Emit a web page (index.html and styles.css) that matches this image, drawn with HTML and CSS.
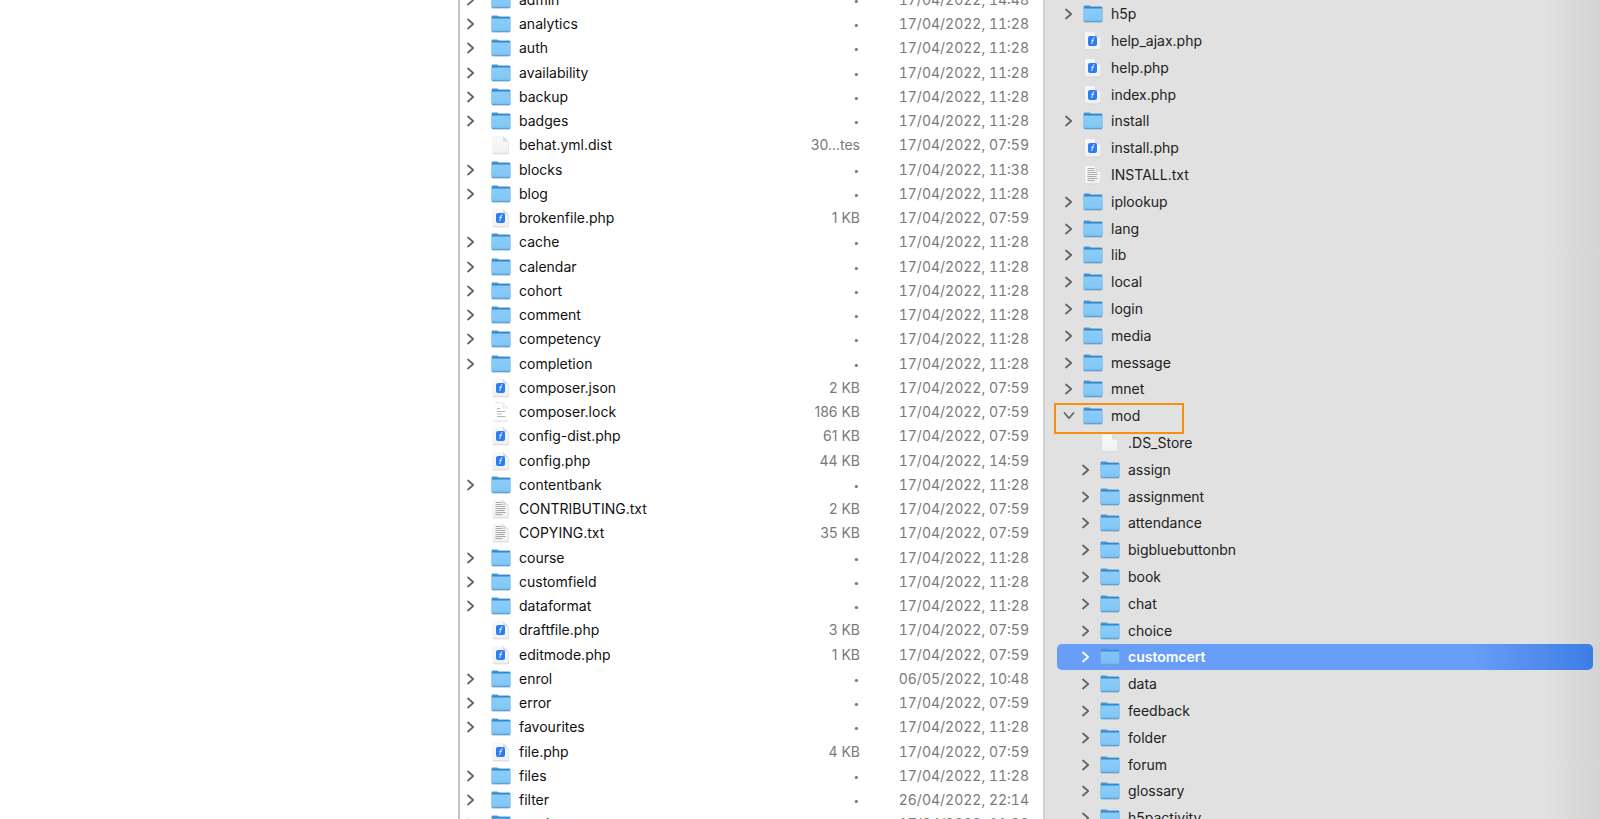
FILE: index.html
```
<!DOCTYPE html>
<html lang="en">
<head>
<meta charset="utf-8">
<title>Files</title>
<link rel="stylesheet" href="styles.css">
</head>
<body>
<svg class="sprite" aria-hidden="true">
  <defs>
    <linearGradient id="front" x1="0" y1="0" x2="0" y2="1"><stop offset="0" stop-color="#8accf9"/><stop offset=".75" stop-color="#84c8f7"/><stop offset="1" stop-color="#6fb5e8"/></linearGradient>
    <linearGradient id="paper" x1="0" y1="0" x2="0" y2="1"><stop offset="0" stop-color="#fafafa"/><stop offset="1" stop-color="#f0f0f0"/></linearGradient>
    <symbol id="folder" viewBox="0 0 20 18">
      <path d="M.6 1.500Q.6.4 1.700.4h4.600q.6 0 1 .5l.5.500H18.300q1.100 0 1.100 1.100V16H.6z" fill="#4a97d3"/>
      <path d="M1 2.600h18v1H1z" fill="#1674c4"/>
      <path d="M.6 3.500h18.800v12.700q0 1-1 1H1.600q-1 0-1-1z" fill="url(#front)"/>
      <path d="M1.200 16.700h17.600" stroke="#5d9bc9" stroke-width="1"/>
    </symbol>
    <symbol id="blank" viewBox="0 0 20 20">
      <path d="M1.800 1.500h10.700l5.300 5.500v11.200q0 1.100-1.100 1.100H2.900q-1.100 0-1.100-1.100z" fill="#cfcfcf"/>
      <path d="M2 1.200h10l5.500 5.300v11q0 1-1 1H3q-1 0-1-1z" fill="url(#paper)"/>
      <path d="M12 1.200v4.300q0 1 1 1h4.500z" fill="#dcdcdc"/>
    </symbol>
    <symbol id="code" viewBox="0 0 20 20">
      <use href="#blank"/>
      <rect x="5" y="5" width="9" height="10" rx="2" fill="#2a7df6"/>
      <path d="M11.500 6.800Q10.300 6.300 9.900 8.200L8.700 13M8.200 9.300h2.800" stroke="#e8f1ff" stroke-width="1" fill="none"/>
    </symbol>
    <symbol id="text" viewBox="0 0 20 20">
      <use href="#blank"/>
      <path d="M4.500 3.500h7M4.500 5.500h7M4.500 7.500h9.500M4.500 9.500h10M4.500 11.500h9M4.500 13.500h10M4.500 15.500h7" stroke="#a0a0a0" stroke-width=".9"/>
    </symbol>
    <symbol id="plain" viewBox="0 0 20 20">
      <path d="M4 .7h7.500l5 5h-4.500V1.500" stroke="#ddd" stroke-width=".8" fill="none"/>
      <path d="M2.500 19h14" stroke="#ddd" stroke-width="1"/>
      <path d="M6 6.500h3M6 9.500h8M6 12h4.500M6 14.500h8.500" stroke="#b4b4b4" stroke-width="1"/>
    </symbol>
    <symbol id="chevron" viewBox="0 0 12 12">
      <path d="M3 1.500L8.200 6 3 10.500" stroke="currentColor" stroke-width="1.700" fill="none" stroke-linecap="round" stroke-linejoin="round"/>
    </symbol>
  </defs>
</svg>
<main class="desktop">
  <section class="blank-area"></section>
  <section class="browser" aria-label="Server files">
    <table class="files"><tbody id="files"></tbody></table>
  </section>
  <aside class="panel" aria-label="Project tree">
    <ul class="tree" id="tree"></ul>
  </aside>
</main>
<script src="files.js"></script>
</body>
</html>
```
FILE: styles.css
```
* { box-sizing: border-box; }

body {
  margin: 0;
  background: #fff;
  color: #222;
  font: 14px/20px Inter, "Liberation Sans", sans-serif;
}

button {
  display: block;
  padding: 0;
  border: 0;
  background: none;
  color: #626262;
  font: inherit;
}

.sprite {
  position: absolute;
  width: 0;
  height: 0;
}

.desktop {
  display: grid;
  grid-template-columns: 458fr 585fr 557fr;
  height: 100vh;
  overflow: hidden;
}

.browser {
  min-width: 0;
  border-left: 2px solid #c4c4c4;
  overflow: hidden;
}

.files {
  width: 100%;
  margin-top: -12px;
  border-collapse: collapse;
  table-layout: fixed;
}

.files tr { height: 24px; }
.files tr:nth-child(4n) { height: 25px; }

.files td {
  padding: 0;
  white-space: nowrap;
}

.name { color: #111; }

.size {
  width: 90px;
  color: #7a7a7a;
  text-align: right;
}

.files .size.folder {
  padding-right: 1px;
  font-size: 10px;
}

.date {
  width: 183px;
  color: #7a7a7a;
  text-align: right;
  font-variant-numeric: tabular-nums;
}

.files .date { padding-right: 14px; }

.entry {
  display: flex;
  align-items: center;
  height: 24px;
  padding-left: 5px;
}

.chevron {
  width: 12px;
  height: 12px;
}

.chevron svg { display: block; }

.icon {
  flex: none;
  width: 20px;
  height: 20px;
  margin: 0 8px 0 14px;
}

.icon.folder {
  height: 18px;
}

.panel {
  min-width: 0;
  border-left: 2px solid #d0d0d0;
  background: linear-gradient(to left, #d3d3d3, #dadad9 28px, #e1e1e1 56px);
  overflow: hidden;
}

.tree {
  margin: 0;
  padding: 0 7px 0 12px;
  list-style: none;
}

.node {
  position: relative;
  display: flex;
  align-items: center;
  height: 27px;
  padding-left: 6px;
  border-radius: 5px;
}

.node:nth-child(5n) { height: 26px; }
.node .icon { margin: 0 8px; }
.child { padding-left: 23px; }
.open .chevron { transform: rotate(90deg); }

.selected {
  background: linear-gradient(to right, #689df8 78%, #3d7de4);
  color: #fff;
  font-weight: 600;
}

.selected .chevron { color: #fff; }
.selected .icon { opacity: .8; }

.marker {
  position: absolute;
  top: 1px;
  left: -3px;
  z-index: 1;
  width: 130px;
  height: 31px;
  border: 2px solid #f78f0f;
}
```
FILE: files.js
```
const DAY = "17/04/2022, ";
const files = [
  ["admin", "folder", "•", DAY + "14:48"],
  ["analytics", "folder", "•", DAY + "11:28"],
  ["auth", "folder", "•", DAY + "11:28"],
  ["availability", "folder", "•", DAY + "11:28"],
  ["backup", "folder", "•", DAY + "11:28"],
  ["badges", "folder", "•", DAY + "11:28"],
  ["behat.yml.dist", "blank", "30...tes", DAY + "07:59"],
  ["blocks", "folder", "•", DAY + "11:38"],
  ["blog", "folder", "•", DAY + "11:28"],
  ["brokenfile.php", "code", "1 KB", DAY + "07:59"],
  ["cache", "folder", "•", DAY + "11:28"],
  ["calendar", "folder", "•", DAY + "11:28"],
  ["cohort", "folder", "•", DAY + "11:28"],
  ["comment", "folder", "•", DAY + "11:28"],
  ["competency", "folder", "•", DAY + "11:28"],
  ["completion", "folder", "•", DAY + "11:28"],
  ["composer.json", "code", "2 KB", DAY + "07:59"],
  ["composer.lock", "plain", "186 KB", DAY + "07:59"],
  ["config-dist.php", "code", "61 KB", DAY + "07:59"],
  ["config.php", "code", "44 KB", DAY + "14:59"],
  ["contentbank", "folder", "•", DAY + "11:28"],
  ["CONTRIBUTING.txt", "text", "2 KB", DAY + "07:59"],
  ["COPYING.txt", "text", "35 KB", DAY + "07:59"],
  ["course", "folder", "•", DAY + "11:28"],
  ["customfield", "folder", "•", DAY + "11:28"],
  ["dataformat", "folder", "•", DAY + "11:28"],
  ["draftfile.php", "code", "3 KB", DAY + "07:59"],
  ["editmode.php", "code", "1 KB", DAY + "07:59"],
  ["enrol", "folder", "•", "06/05/2022, 10:48"],
  ["error", "folder", "•", DAY + "07:59"],
  ["favourites", "folder", "•", DAY + "11:28"],
  ["file.php", "code", "4 KB", DAY + "07:59"],
  ["files", "folder", "•", DAY + "11:28"],
  ["filter", "folder", "•", "26/04/2022, 22:14"],
  ["grade", "folder", "•", DAY + "11:28"]
];

const tree = [
  ["h5p", "folder"], ["help_ajax.php", "code"], ["help.php", "code"],
  ["index.php", "code"], ["install", "folder"], ["install.php", "code"],
  ["INSTALL.txt", "text"], ["iplookup", "folder"], ["lang", "folder"],
  ["lib", "folder"], ["local", "folder"], ["login", "folder"],
  ["media", "folder"], ["message", "folder"], ["mnet", "folder"],
  ["mod", "folder", "open"], [".DS_Store", "blank", "child"],
  ["assign", "folder", "child"], ["assignment", "folder", "child"],
  ["attendance", "folder", "child"], ["bigbluebuttonbn", "folder", "child"],
  ["book", "folder", "child"], ["chat", "folder", "child"],
  ["choice", "folder", "child"], ["customcert", "folder", "child selected"],
  ["data", "folder", "child"], ["feedback", "folder", "child"],
  ["folder", "folder", "child"], ["forum", "folder", "child"],
  ["glossary", "folder", "child"], ["h5pactivity", "folder", "child"]
];

function content(name, kind, open) {
  const toggle = kind === "folder"
    ? `<button class="chevron" aria-label="Toggle ${name}" aria-expanded="${open}"><svg width="12" height="12"><use href="#chevron"/></svg></button>`
    : `<span class="chevron"></span>`;
  return `${toggle}<svg class="icon ${kind}" aria-hidden="true"><use href="#${kind}"/></svg><span>${name}</span>`;
}

document.getElementById("files").innerHTML = files.map(([name, kind, size, date]) =>
  `<tr><td class="name"><div class="entry">${content(name, kind, false)}</div></td>` +
  `<td class="size ${kind}">${size}</td><td class="date">${date}</td></tr>`).join("");

document.getElementById("tree").innerHTML = tree.map(([name, kind, state = ""]) =>
  `<li class="node ${state}">${content(name, kind, state === "open")}` +
  `${state === "open" ? '<span class="marker"></span>' : ""}</li>`).join("");
```
